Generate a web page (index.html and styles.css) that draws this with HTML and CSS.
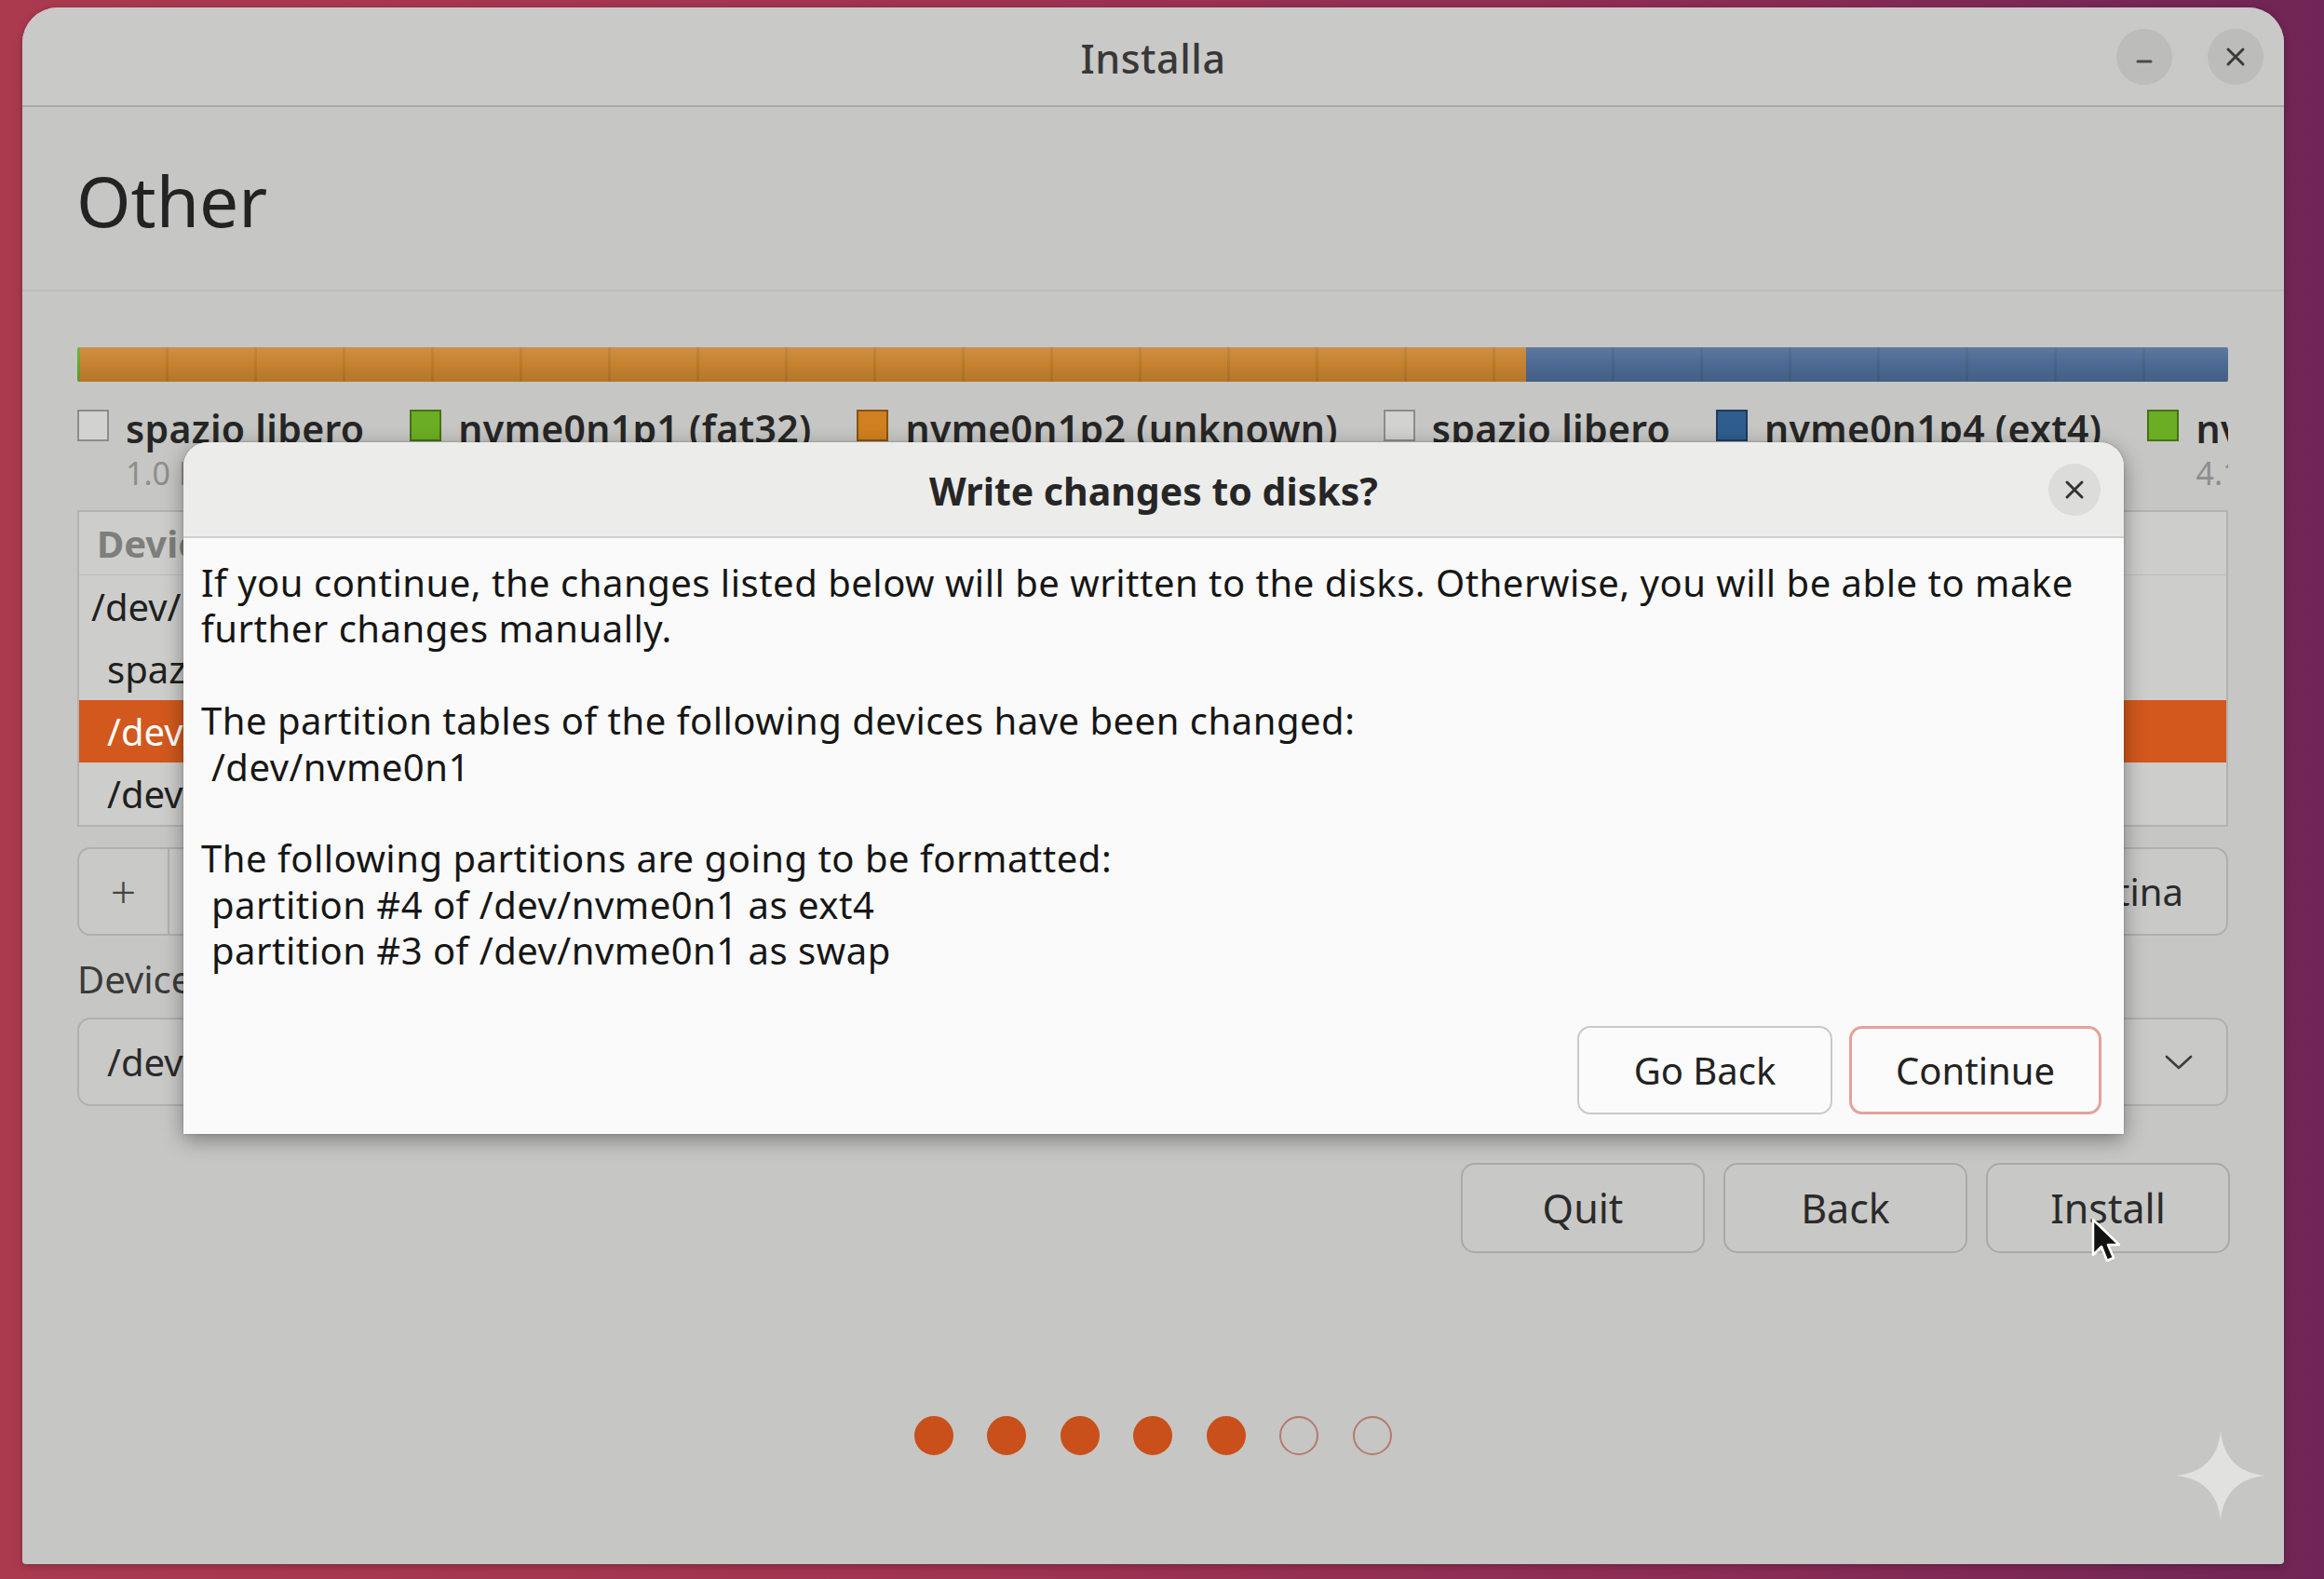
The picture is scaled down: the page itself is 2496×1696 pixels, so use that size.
FILE: index.html
```html
<!DOCTYPE html>
<html lang="it">
<head>
<meta charset="utf-8">
<title>Installa</title>
<link rel="stylesheet" href="styles.css">
</head>
<body>
<div class="desktop">
  <div class="window">
    <header class="titlebar">
      <span></span>
      <span class="wtitle">Installa</span>
      <div class="wm-buttons">
        <span class="wm-btn"><svg viewBox="0 0 60 60" width="60" height="60"><line x1="23" y1="35" x2="37" y2="35" stroke="#4a4a4a" stroke-width="3" stroke-linecap="round"/></svg></span>
        <span class="wm-btn"><svg viewBox="0 0 60 60" width="60" height="60"><path d="M22 22 L38 38 M38 22 L22 38" stroke="#3a3a3a" stroke-width="3" stroke-linecap="round" fill="none"/></svg></span>
      </div>
    </header>

    <section class="page-head"><h1>Other</h1></section>

    <main class="content">
      <div class="partbar">
        <span class="seg seg-green" style="flex-basis:0.15%"></span>
        <span class="seg seg-orange" style="flex-basis:67.2%"></span>
        <span class="seg seg-blue" style="flex-basis:32.65%"></span>
      </div>

      <div class="legend">
        <div class="litem"><div class="lrow"><span class="sw sw-free"></span><span class="lname">spazio libero</span></div><div class="lsize">1.0 MB</div></div>
        <div class="litem"><div class="lrow"><span class="sw sw-green"></span><span class="lname">nvme0n1p1 (fat32)</span></div><div class="lsize">536.9 MB</div></div>
        <div class="litem"><div class="lrow"><span class="sw sw-orange"></span><span class="lname">nvme0n1p2 (unknown)</span></div><div class="lsize">343.6 GB</div></div>
        <div class="litem"><div class="lrow"><span class="sw sw-free"></span><span class="lname">spazio libero</span></div><div class="lsize">1.0 MB</div></div>
        <div class="litem"><div class="lrow"><span class="sw sw-blue"></span><span class="lname">nvme0n1p4 (ext4)</span></div><div class="lsize">161.1 GB</div></div>
        <div class="litem"><div class="lrow"><span class="sw sw-green"></span><span class="lname">nvme0n1p3 (linux-swap)</span></div><div class="lsize">4.1 GB</div></div>
      </div>

      <div class="ptable">
        <div class="prow phead"><span class="c-dev">Device</span><span class="c-type">Type</span><span class="c-mount">Mount point</span></div>
        <div class="prow"><span class="c-dev">/dev/nvme0n1</span></div>
        <div class="prow part"><span class="c-dev">spazio libero</span></div>
        <div class="prow part sel"><span class="c-dev">/dev/nvme0n1p4</span><span class="c-type">ext4</span><span class="c-mount">/</span></div>
        <div class="prow part"><span class="c-dev">/dev/nvme0n1p3</span><span class="c-type">swap</span></div>
      </div>

      <div class="ptools">
        <div class="linked">
          <span class="tbtn sq">+</span><span class="tbtn sq">−</span><span class="tbtn">Change…</span>
        </div>
        <div class="tools-right">
          <span class="tbtn">Nuova tabella delle partizioni…</span>
          <span class="tbtn revert">Ripristina</span>
        </div>
      </div>

      <div class="boot-label">Device for boot loader installation:</div>
      <div class="combo">
        <span>/dev/nvme0n1 SAMSUNG MZVLB512HBJQ-000L7 (512.1 GB)</span>
        <svg class="chev" viewBox="0 0 30 16" width="30" height="16"><polyline points="2,2 15,14 28,2" fill="none" stroke="#3c3c3c" stroke-width="2.6" stroke-linecap="round" stroke-linejoin="round"/></svg>
      </div>

      <div class="nav">
        <span class="nbtn">Quit</span>
        <span class="nbtn">Back</span>
        <span class="nbtn">Install</span>
      </div>

      <div class="dots">
        <span class="dot on"></span><span class="dot on"></span><span class="dot on"></span><span class="dot on"></span><span class="dot on"></span><span class="dot"></span><span class="dot"></span>
      </div>
    </main>

    <div class="dialog">
      <div class="dhead">
        <span></span>
        <span class="dtitle">Write changes to disks?</span>
        <span class="dclose"><svg viewBox="0 0 56 56" width="56" height="56"><path d="M20 20 L36 36 M36 20 L20 36" stroke="#333" stroke-width="3" stroke-linecap="round" fill="none"/></svg></span>
      </div>
      <p class="dmsg">If you continue, the changes listed below will be written to the disks. Otherwise, you will be able to make
further changes manually.

The partition tables of the following devices have been changed:
 /dev/nvme0n1

The following partitions are going to be formatted:
 partition #4 of /dev/nvme0n1 as ext4
 partition #3 of /dev/nvme0n1 as swap</p>
      <div class="dactions">
        <span class="dbtn goback">Go Back</span>
        <span class="dbtn cont">Continue</span>
      </div>
    </div>

    <svg class="cursor" viewBox="0 0 34 50" width="34" height="50"><path d="M2 2 L2 40 L11 31 L17 46 L24 43 L18 29 L30 29 Z" fill="#111" stroke="#fff" stroke-width="2.5" stroke-linejoin="round"/></svg>
    <svg class="sparkle" viewBox="0 0 100 100" width="96" height="96"><path d="M50 0 C53 30 70 47 100 50 C70 53 53 70 50 100 C47 70 30 53 0 50 C30 47 47 30 50 0 Z" fill="#e4e4e4"/></svg>
  </div>
</div>
</body>
</html>
```

FILE: styles.css
```css
* { box-sizing: border-box; }

html, body {
  margin: 0;
  padding: 0;
  width: 2496px;
  height: 1696px;
  overflow: hidden;
}

body {
  font-family: "Noto Sans", "DejaVu Sans", sans-serif;
  color: #222;
}

.desktop {
  width: 2496px;
  height: 1696px;
  padding: 8px 0 0 24px;
  background: linear-gradient(90deg, #ab3a4f 0%, #a13451 40%, #8a2c55 75%, #6f2556 100%);
}

.window {
  position: relative;
  width: 2429px;
  height: 1672px;
  background: #c6c6c4;
  border-radius: 38px 38px 4px 4px;
  overflow: hidden;
  box-shadow: 0 2px 8px rgba(0,0,0,0.25);
}

/* ---------- title bar ---------- */
.titlebar {
  height: 107px;
  display: grid;
  grid-template-columns: 1fr auto 1fr;
  align-items: center;
  background: #c9c9c7;
  border-bottom: 2px solid #a9a9a7;
}

.wtitle {
  font-size: 43px;
  font-weight: 500;
  color: #383838;
  letter-spacing: 0.5px;
  padding-top: 4px;
}

.wm-buttons {
  justify-self: end;
  display: flex;
  gap: 38px;
  padding-right: 22px;
}

.wm-btn {
  width: 60px;
  height: 60px;
  border-radius: 50%;
  background: #bcbcba;
  display: flex;
}

/* ---------- heading ---------- */
.page-head {
  height: 198px;
  display: flex;
  align-items: center;
  padding-left: 58px;
  border-bottom: 2px solid #bcbcba;
}

.page-head h1 {
  margin: 0;
  font-size: 75px;
  font-weight: 400;
  line-height: 75px;
  color: #232323;
  padding-top: 4px;
}

/* ---------- content ---------- */
.content {
  padding: 0 60px 0 59px;
}

.partbar {
  margin-top: 60px;
  height: 37px;
  display: flex;
  border-radius: 2px;
  overflow: hidden;
}

.seg {
  flex-grow: 0;
  flex-shrink: 0;
  height: 100%;
  background-image:
    linear-gradient(180deg, rgba(255,255,255,0.10) 0%, rgba(0,0,0,0) 45%, rgba(0,0,0,0.10) 100%),
    repeating-linear-gradient(90deg, rgba(0,0,0,0) 0 92px, rgba(0,0,0,0.07) 92px 95px);
}
.seg-green { background-color: #6aa82c; }
.seg-orange { background-color: #c7832f; }
.seg-blue { background-color: #4c6a93; }

.legend {
  margin-top: 30px;
  display: flex;
  gap: 49px;
  white-space: nowrap;
  overflow: hidden;
}

.litem {
  flex-shrink: 0;
  display: flex;
  flex-direction: column;
}

.lrow {
  display: flex;
  align-items: center;
  gap: 18px;
  height: 34px;
}

.sw {
  width: 34px;
  height: 34px;
  flex-shrink: 0;
  border: 2px solid rgba(0,0,0,0.35);
}
.sw-free { background: #d2d2d0; border-color: #8c8c8a; }
.sw-green { background: #6cae23; }
.sw-orange { background: #d0801f; }
.sw-blue { background: #2f5d8f; }

.lname {
  font-size: 41px;
  font-weight: 600;
  letter-spacing: 0.3px;
  color: #262626;
  line-height: 34px;
  padding-top: 6px;
}

.lsize {
  margin-top: 14px;
  padding-left: 52px;
  font-size: 34px;
  line-height: 40px;
  color: #8e8e8c;
}

/* partition table */
.ptable {
  margin-top: 20px;
  border: 2px solid #b2b2b0;
  background: #cdcdcb;
}

.prow {
  height: 67px;
  display: grid;
  grid-template-columns: 620px 260px 360px;
  align-items: center;
  padding-left: 13px;
  font-size: 40px;
  color: #202020;
  white-space: nowrap;
}

.prow.part { padding-left: 30px; }

.phead {
  height: 68px;
  padding-left: 19px;
  font-weight: 700;
  color: #7e7e7c;
  border-bottom: 1px solid #bdbdbb;
}

.prow.sel {
  background: #d2581d;
  color: #fff;
}

/* tool buttons */
.ptools {
  margin-top: 22px;
  display: flex;
  justify-content: space-between;
}

.linked, .tools-right {
  display: flex;
}

.tools-right { gap: 20px; }

.tbtn {
  height: 95px;
  display: flex;
  align-items: center;
  justify-content: center;
  padding: 0 46px;
  border: 2px solid #afafad;
  border-radius: 14px;
  background: #c9c9c7;
  font-size: 40px;
  color: #2a2a2a;
  white-space: nowrap;
}

.tbtn.sq {
  width: 99px;
  padding: 0;
  font-size: 48px;
  font-weight: 300;
  color: #444;
}

.linked .tbtn { border-radius: 0; }
.linked .tbtn:first-child { border-radius: 14px 0 0 14px; }
.linked .tbtn:last-child { border-radius: 0 14px 14px 0; }
.linked .tbtn + .tbtn { border-left: none; }

.boot-label {
  margin-top: 23px;
  font-size: 40px;
  line-height: 48px;
  color: #3a3a3a;
}

.combo {
  margin-top: 17px;
  height: 95px;
  display: flex;
  align-items: center;
  justify-content: space-between;
  padding: 0 36px 0 30px;
  border: 2px solid #b0b0ae;
  border-radius: 14px;
  background: #c9c9c7;
  font-size: 40px;
  color: #2a2a2a;
}

/* bottom navigation */
.nav {
  margin-top: 61px;
  display: flex;
  justify-content: flex-end;
  gap: 20px;
  margin-right: -2px;
}

.nbtn {
  width: 262px;
  height: 97px;
  display: flex;
  align-items: center;
  justify-content: center;
  border: 2px solid #a9a9a7;
  border-radius: 15px;
  background: #c8c8c6;
  font-size: 43px;
  color: #2b2b2b;
}

.dots {
  margin-top: 175px;
  display: flex;
  justify-content: center;
  gap: 36.5px;
}

.dot {
  width: 42px;
  height: 42px;
  border-radius: 50%;
  border: 2.5px solid #b67a6c;
  background: #c6c6c4;
}
.dot.on {
  background: #c9501a;
  border-color: #c9501a;
}

/* ---------- modal dialog ---------- */
.dialog {
  position: absolute;
  left: 173px;
  top: 467px;
  width: 2084px;
  height: 743px;
  display: flex;
  flex-direction: column;
  background: #fafafa;
  border-radius: 26px 26px 0 0;
  box-shadow: 0 6px 22px rgba(0,0,0,0.38), 0 0 2px rgba(0,0,0,0.3);
}

.dhead {
  height: 103px;
  display: grid;
  grid-template-columns: 1fr auto 1fr;
  align-items: center;
  background: #ececeb;
  border-bottom: 2px solid #cfcfcd;
  border-radius: 26px 26px 0 0;
}

.dtitle {
  font-size: 41px;
  font-weight: 700;
  color: #262626;
  padding-top: 2px;
}

.dclose {
  justify-self: end;
  margin-right: 25px;
  width: 56px;
  height: 56px;
  border-radius: 50%;
  background: #dcdcdb;
  display: flex;
}

.dmsg {
  margin: 0;
  padding: 23px 22px 0 19px;
  white-space: pre;
  font-size: 40px;
  line-height: 49.4px;
  letter-spacing: 0.5px;
  color: #161616;
}

.dactions {
  margin-top: auto;
  display: flex;
  justify-content: flex-end;
  gap: 18px;
  padding: 0 24px 21px 0;
}

.dbtn {
  height: 95px;
  display: flex;
  align-items: center;
  justify-content: center;
  border-radius: 14px;
  background: #fbfbfb;
  font-size: 40px;
  color: #222;
}

.goback {
  width: 274px;
  border: 2px solid #c9c9c7;
}

.cont {
  width: 271px;
  border: 3px solid #e4a299;
}

/* ---------- overlays ---------- */
.cursor {
  position: absolute;
  left: 2222px;
  top: 1300px;
}

.sparkle {
  position: absolute;
  left: 2313px;
  top: 1529px;
  opacity: 0.9;
}
```
